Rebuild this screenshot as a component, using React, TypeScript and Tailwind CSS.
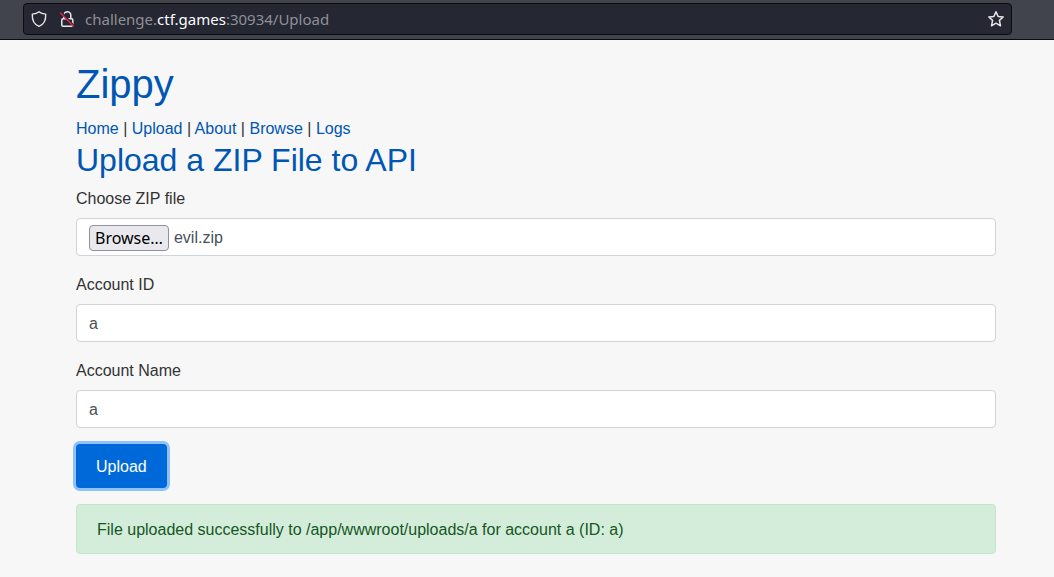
import { useRef, useState } from "react";
import type { FormEvent } from "react";

const links = ["Home", "Upload", "About", "Browse", "Logs"];

function ShieldIcon() {
  return (
    <svg width="16" height="18" viewBox="0 0 16 18" fill="none" stroke="#e6e6ea" strokeWidth="1.4" strokeLinejoin="round" aria-hidden="true">
      <path d="M8 1.7 C6.4 3 4 3.8 1.3 4.1 C1 9.8 2.7 14.3 8 16.4 C13.3 14.3 15 9.8 14.7 4.1 C12 3.8 9.6 3 8 1.7 Z" />
    </svg>
  );
}

function InsecureLockIcon() {
  return (
    <svg width="16" height="18" viewBox="0 0 16 18" fill="none" aria-hidden="true">
      <path d="M4.8 8.5 V5.3 A3.5 3.5 0 0 1 11.8 5.3 V8.5" stroke="#e6e6ea" strokeWidth="1.5" />
      <rect x="2.8" y="8.7" width="11" height="7.6" rx="1.2" stroke="#e6e6ea" strokeWidth="1.5" />
      <path d="M2.2 2.2 L15 16.2" stroke="#252732" strokeWidth="2.4" />
      <path d="M1.2 2.8 L14.8 16.6" stroke="#e22850" strokeWidth="1.4" />
    </svg>
  );
}

function StarIcon() {
  return (
    <svg width="18" height="18" viewBox="0 0 18 18" fill="none" stroke="#e6e6ea" strokeWidth="1.5" strokeLinejoin="round" aria-hidden="true">
      <path d="M9 1.8 L11.1 6.4 L16.2 7 L12.4 10.4 L13.5 15.8 L9 13.2 L4.5 15.8 L5.6 10.4 L1.8 7 L6.9 6.4 Z" />
    </svg>
  );
}

function AddressBar() {
  return (
    <header className="flex h-10 border-b border-[#0c0c0d] bg-[#42444d] pt-[3px] pr-[42px] pl-[23px] font-['Noto_Sans',sans-serif]">
      <div className="flex h-8 flex-1 items-center rounded border border-[#0c0c0d] bg-[#252732] pr-1.5 pl-[7px]">
        <button type="button" aria-label="Tracking protection">
          <ShieldIcon />
        </button>
        <button type="button" aria-label="Connection not secure" className="ml-3">
          <InsecureLockIcon />
        </button>
        <p className="ml-2.5 flex-1 text-[15px] leading-5 text-[#8f9097]">
          challenge.<span className="text-[#fbfbfe]">ctf.games</span>:30934/Upload
        </p>
        <button type="button" aria-label="Bookmark this page">
          <StarIcon />
        </button>
      </div>
    </header>
  );
}

function TextField({ id, label }: { id: string; label: string }) {
  return (
    <div className="mb-4">
      <label htmlFor={id} className="mb-1.5 block leading-[26px]">
        {label}
      </label>
      <input
        id={id}
        type="text"
        defaultValue="a"
        className="block h-[38px] w-full rounded border border-[#ced4da] bg-white px-3 pt-0.5 text-[#495057]"
      />
    </div>
  );
}

function FileField() {
  const picker = useRef<HTMLInputElement>(null);
  const [name, setName] = useState("evil.zip");
  return (
    <div className="mb-4">
      <label htmlFor="zip" className="mb-1.5 block leading-[26px]">
        Choose ZIP file
      </label>
      <div className="relative flex h-[38px] items-center rounded border border-[#ced4da] bg-white px-3 pt-0.5 text-[#495057]">
        <input
          ref={picker}
          id="zip"
          type="file"
          accept=".zip"
          className="sr-only"
          onChange={(e) => setName(e.target.files?.[0]?.name ?? name)}
        />
        <button
          type="button"
          onClick={() => picker.current?.click()}
          className="mr-[5px] h-[26px] rounded border border-[#8f8f9d] bg-[#e9e9ed] px-[5px] font-['Noto_Sans',sans-serif] text-base leading-6 text-black"
        >
          Browse…
        </button>
        <span className="leading-[26px]">{name}</span>
      </div>
    </div>
  );
}

export default function App() {
  return (
    <div className="min-h-screen bg-[#f7f7f7] font-['Liberation_Sans',Arial,sans-serif] text-base text-[#333333]">
      <AddressBar />
      <main className="pt-5 pr-[58px] pb-6 pl-[76px]">
        <h1 className="mb-2 text-[40px] leading-12 text-[#0056b3]">Zippy</h1>
        <nav className="leading-[26px]">
          {links.map((link, i) => (
            <span key={link}>
              {i > 0 && " | "}
              <a href={`/${link}`} className="text-[#0056b3] hover:underline">
                {link}
              </a>
            </span>
          ))}
        </nav>
        <h2 className="mb-2 text-[32px] leading-9 text-[#0056b3]">Upload a ZIP File to API</h2>
        <form onSubmit={(e: FormEvent) => e.preventDefault()}>
          <FileField />
          <TextField id="account-id" label="Account ID" />
          <TextField id="account-name" label="Account Name" />
          <button type="submit" className="block h-11 rounded bg-[#0069d9] px-5 pt-0.5 text-white ring-3 ring-[#8dc2fb]">
            Upload
          </button>
        </form>
        <div role="status" className="mt-4 rounded border border-[#c3e6cb] bg-[#d4edda] px-5 pt-[13px] pb-[11px] text-[#155724]">
          File uploaded successfully to /app/wwwroot/uploads/a for account a (ID: a)
        </div>
      </main>
    </div>
  );
}
